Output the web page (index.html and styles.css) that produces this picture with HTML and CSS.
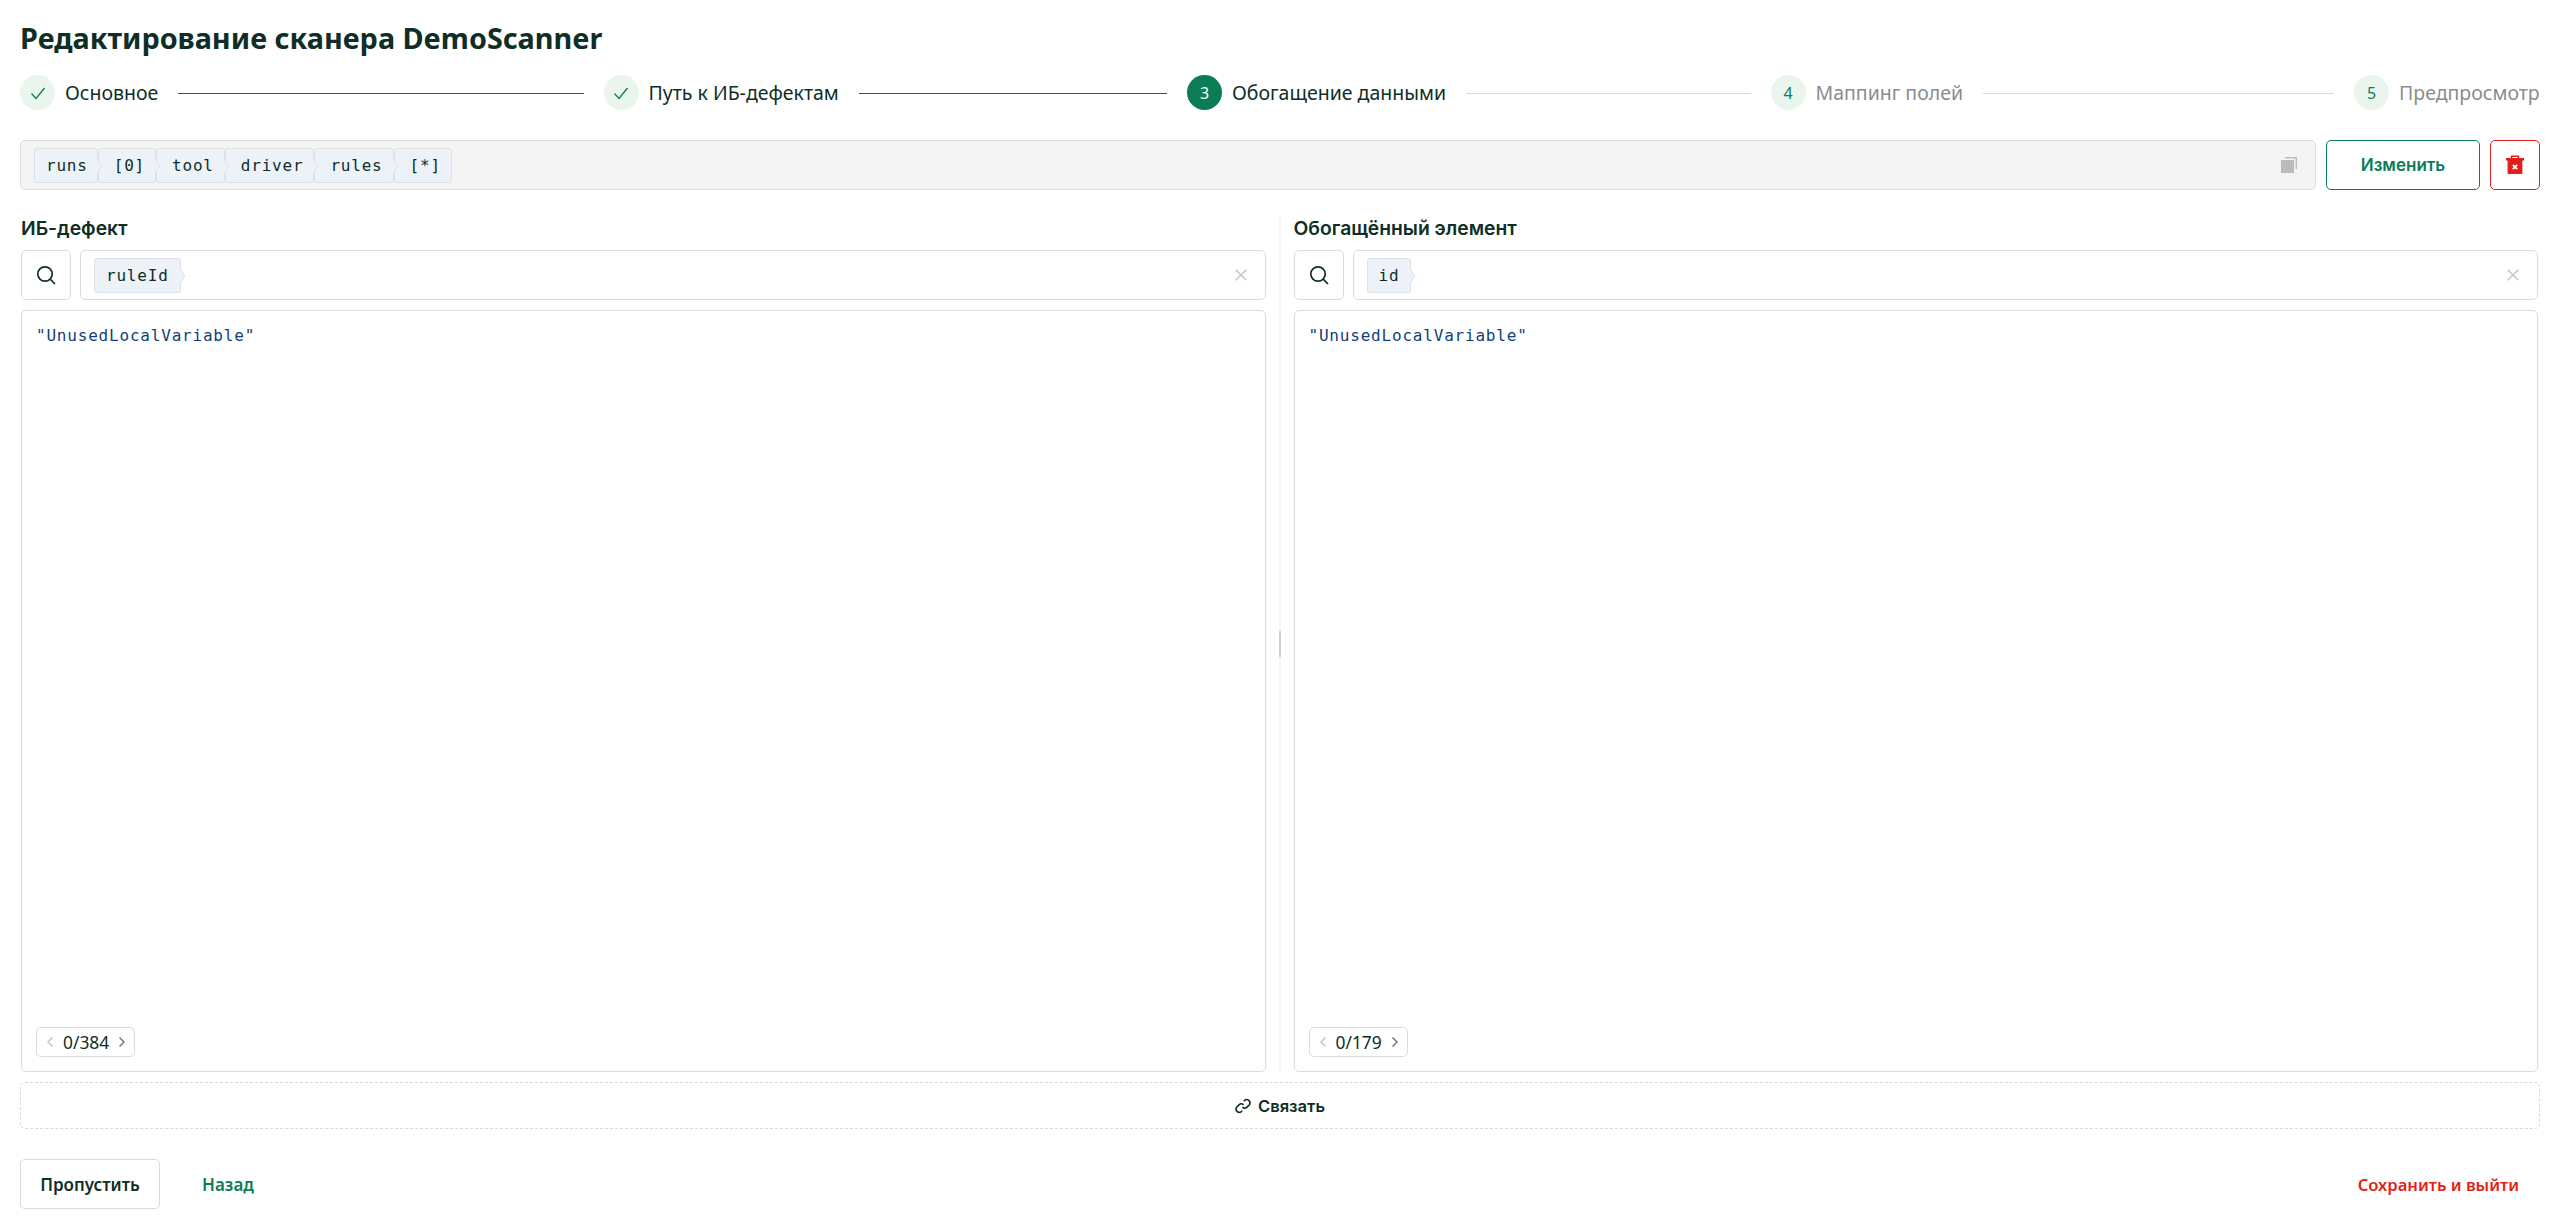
FILE: index.html
```html
<!DOCTYPE html>
<html lang="ru">
<head>
<meta charset="utf-8">
<title>Редактирование сканера</title>
<link rel="stylesheet" href="styles.css">
</head>
<body>
<main class="page">
  <h1 class="title">Редактирование сканера DemoScanner</h1>
  <ol class="steps">
    <li class="step done"><span class="dot"><svg width="18" height="18" viewBox="0 0 18 18"><path d="M2.5 9.5 7 14.5 15.5 4" fill="none" stroke="#0a7d56" stroke-width="1.3"/></svg></span><span class="step-text">Основное</span><span class="line"></span></li>
    <li class="step done"><span class="dot"><svg width="18" height="18" viewBox="0 0 18 18"><path d="M2.5 9.5 7 14.5 15.5 4" fill="none" stroke="#0a7d56" stroke-width="1.3"/></svg></span><span class="step-text">Путь к ИБ-дефектам</span><span class="line"></span></li>
    <li class="step current"><span class="dot">3</span><span class="step-text">Обогащение данными</span><span class="line"></span></li>
    <li class="step todo"><span class="dot">4</span><span class="step-text">Маппинг полей</span><span class="line"></span></li>
    <li class="step todo last"><span class="dot">5</span><span class="step-text">Предпросмотр</span></li>
  </ol>
  <section class="pathrow">
    <div class="pathbar">
      <div class="crumbs">
        <span class="chip crumb first">runs</span><span class="chip crumb">[0]</span><span class="chip crumb">tool</span><span class="chip crumb">driver</span><span class="chip crumb">rules</span><span class="chip crumb end">[*]</span>
      </div>
      <svg class="copy" width="16" height="16" viewBox="0 0 16 16"><path d="M4 0H16V12H14.6V1.4H4Z" fill="#bbb"/><path d="M0 3H13V16H0Z" fill="#bbb"/></svg>
    </div>
    <button class="btn edit">Изменить</button>
    <button class="btn del"><svg width="20" height="20" viewBox="0 0 20 20"><path d="M6.5 3.5V1.2H13.5V3.5" fill="none" stroke="#e01f19" stroke-width="1.4"/><path d="M1 3H19V5.6H17.4V19H2.6V5.6H1Z" fill="#e01f19"/><path d="M7.8 9.8 12.2 14.2M12.2 9.8 7.8 14.2" stroke="#fff" stroke-width="1.8"/></svg></button>
  </section>
  <section class="columns">
    <div class="col col-left">
      <h2 class="col-title">ИБ-дефект</h2>
      <div class="search">
        <button class="icon-btn"><svg width="20" height="20" viewBox="0 0 20 20"><circle cx="9" cy="9" r="7.2" fill="none" stroke="#0f2e26" stroke-width="1.7"/><path d="M14.2 14.2 19 19" stroke="#0f2e26" stroke-width="1.7"/></svg></button>
        <div class="input"><span class="chip">ruleId</span><svg class="clear" width="12" height="12" viewBox="0 0 12 12"><path d="M.7.7 11.3 11.3M11.3.7.7 11.3" stroke="#c4c4c4" stroke-width="1.5"/></svg></div>
      </div>
      <div class="panel">
        <code class="value">"UnusedLocalVariable"</code>
        <div class="pager"><svg width="6" height="10" viewBox="0 0 6 10"><path d="M5.5.5 1 5 5.5 9.5" fill="none" stroke="#c6c6c6" stroke-width="1.5"/></svg><span class="count">0/384</span><svg width="6" height="10" viewBox="0 0 6 10"><path d="M.5.5 5 5 .5 9.5" fill="none" stroke="#6f7680" stroke-width="1.5"/></svg></div>
      </div>
    </div>
    <div class="splitter"><span class="handle"></span></div>
    <div class="col col-right">
      <h2 class="col-title">Обогащённый элемент</h2>
      <div class="search">
        <button class="icon-btn"><svg width="20" height="20" viewBox="0 0 20 20"><circle cx="9" cy="9" r="7.2" fill="none" stroke="#0f2e26" stroke-width="1.7"/><path d="M14.2 14.2 19 19" stroke="#0f2e26" stroke-width="1.7"/></svg></button>
        <div class="input"><span class="chip">id</span><svg class="clear" width="12" height="12" viewBox="0 0 12 12"><path d="M.7.7 11.3 11.3M11.3.7.7 11.3" stroke="#c4c4c4" stroke-width="1.5"/></svg></div>
      </div>
      <div class="panel">
        <code class="value">"UnusedLocalVariable"</code>
        <div class="pager"><svg width="6" height="10" viewBox="0 0 6 10"><path d="M5.5.5 1 5 5.5 9.5" fill="none" stroke="#c6c6c6" stroke-width="1.5"/></svg><span class="count">0/179</span><svg width="6" height="10" viewBox="0 0 6 10"><path d="M.5.5 5 5 .5 9.5" fill="none" stroke="#6f7680" stroke-width="1.5"/></svg></div>
      </div>
    </div>
  </section>
  <button class="link"><svg width="16" height="16" viewBox="0 0 16 16"><path d="M8.8 3.2 9.9 2.1A3.3 3.3 0 0 1 14.4 6.7L12 9.1A3.3 3.3 0 0 1 7.4 9.1" fill="none" stroke="#0f2e26" stroke-width="1.6"/><path d="M7.2 12.8 6.1 13.9A3.3 3.3 0 0 1 1.6 9.3L4 6.9A3.3 3.3 0 0 1 8.6 6.9" fill="none" stroke="#0f2e26" stroke-width="1.6"/></svg>Связать</button>
  <footer class="footer">
    <button class="btn skip">Пропустить</button>
    <button class="text-btn back">Назад</button>
    <button class="text-btn save">Сохранить и выйти</button>
  </footer>
</main>
</body>
</html>
```
FILE: styles.css
```css
* { box-sizing: border-box; }
html, body { margin: 0; height: 100%; background: #fff; }
body { font-family: "Noto Sans", sans-serif; color: #0f2e26; }
.page { height: 1229px; padding: 0 20px 20px; display: flex; flex-direction: column; }
button { font: inherit; cursor: pointer; background: #fff; }
.title { margin: 19px 0 0; font-size: 28.8px; line-height: 38px; font-weight: 700; }
.steps { list-style: none; margin: 18px 0 0; padding: 0; display: flex; height: 35px; }
.step { flex: 1 1 0; display: flex; align-items: center; min-width: 0; font-size: 19.5px; line-height: 26px; }
.step.last { flex: 0 0 186px; }
.dot { flex: none; width: 35px; height: 35px; border-radius: 50%; background: #eaf5ee; color: #0a7d56; display: flex; align-items: center; justify-content: center; font-size: 16px; }
.step-text { margin-left: 10px; white-space: nowrap; color: #0f2e26; }
.line { flex: 1; height: 1px; margin: 2px 20px 0; background: #12694c; }
.current .dot { background: #0a7d56; color: #fff; }
.current .line, .todo .line { background: #d9d9d9; }
.todo .step-text { color: #8c8c8c; }
.pathrow { display: flex; gap: 10px; margin-top: 30px; height: 50px; }
.pathbar { flex: 1; background: #f4f4f4; border: 1px solid #dcdcdc; border-radius: 5px; display: flex; align-items: center; padding: 0 18px 0 13px; }
.crumbs { display: flex; flex: 1; }
.chip { position: relative; display: inline-flex; align-items: center; height: 35px; padding: 0 11px; background: #edf2f9; border: 1px solid #dde1e6; border-radius: 3px; font-family: "DejaVu Sans Mono", monospace; font-size: 16px; letter-spacing: .8px; color: #0f2e26; }
.crumb { padding: 0 10px 0 15px; }
.crumb.first { padding: 0 9px 0 11px; }
.chip::after { content: ""; position: absolute; z-index: 1; right: -6px; top: 50%; width: 11px; height: 11px; margin-top: -5.5px; background: #edf2f9; border-top: 1px solid #dde1e6; border-right: 1px solid #dde1e6; transform: scaleX(.6) rotate(45deg); }
.chip.end::after { display: none; }
.copy { flex: none; }
.btn { height: 50px; border: 1px solid #d9d9d9; border-radius: 5px; font-weight: 600; }
.edit { width: 154px; border-color: #0a7d56; color: #0a7d56; font-family: Inter, sans-serif; font-size: 17px; }
.del { width: 50px; border-color: #e01f19; padding: 0; display: flex; align-items: center; justify-content: center; }
.columns { flex: 1; display: flex; margin-top: 20px; min-height: 0; }
.col { flex: 1 1 0; display: flex; flex-direction: column; min-width: 0; }
.col-left { padding-left: 1px; }
.col-right { padding-right: 2px; }
.col-title { margin: 0; height: 40px; font-family: Inter, sans-serif; font-size: 19.3px; font-weight: 600; line-height: 36px; }
.search { display: flex; gap: 9px; height: 50px; }
.icon-btn { flex: none; width: 50px; border: 1px solid #dcdcdc; border-radius: 5px; padding: 0; display: flex; align-items: center; justify-content: center; }
.input { flex: 1; border: 1px solid #dcdcdc; border-radius: 5px; display: flex; align-items: center; justify-content: space-between; padding: 0 18px 0 13px; }
.panel { flex: 1; margin-top: 10px; border: 1px solid #dcdcdc; border-radius: 5px; padding: 13px 14px 14px; display: flex; flex-direction: column; justify-content: space-between; align-items: flex-start; }
.value { font-family: "DejaVu Sans Mono", monospace; font-size: 16px; line-height: 24px; color: #123f78; letter-spacing: .8px; }
.pager { display: flex; align-items: center; height: 30px; padding: 0 9px 0 10px; gap: 10px; border: 1px solid #dcdcdc; border-radius: 5px; font-size: 17.4px; }
.splitter { flex: none; width: 28px; margin-top: 5px; position: relative; display: flex; justify-content: center; align-items: center; }
.splitter::before { content: ""; position: absolute; top: 0; bottom: 0; left: 13px; width: 2px; background: #f4f4f4; }
.handle { position: relative; width: 2px; height: 26px; background: #cfcfcf; }
.link { margin-top: 10px; height: 47px; flex: none; width: 100%; border: 1px dashed #d9d9d9; border-radius: 5px; display: flex; align-items: center; justify-content: center; gap: 7px; font-family: Inter, sans-serif; font-size: 16.6px; font-weight: 600; color: #0f2e26; }
.footer { margin-top: 30px; flex: none; display: flex; align-items: center; }
.skip { width: 140px; font-size: 17px; color: #0f2e26; }
.text-btn { border: 0; padding: 0; font-size: 17px; font-weight: 600; background: none; }
.back { margin-left: 42px; color: #0a7d56; }
.save { margin-left: auto; margin-right: 21px; font-size: 16.6px; color: #e01f19; }
```
